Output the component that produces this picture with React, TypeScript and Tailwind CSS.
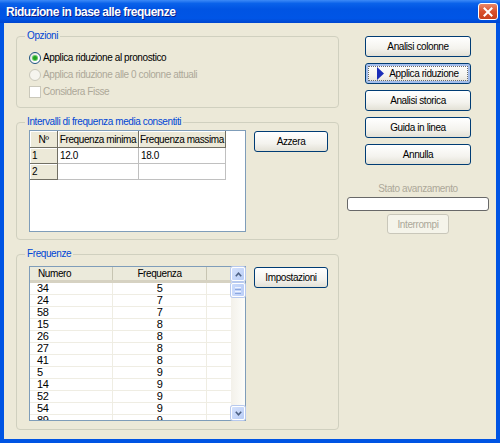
import type { ReactNode } from 'react';

const frequenze: [number, number][] = [
  [34, 5],
  [24, 7],
  [58, 7],
  [15, 8],
  [26, 8],
  [27, 8],
  [41, 8],
  [5, 9],
  [14, 9],
  [52, 9],
  [54, 9],
  [89, 9]
];

const XpButton = ({ children, className = '' }: { children: ReactNode; className?: string }) => (
  <button
    type="button"
    className={`flex h-[21px] items-center justify-center rounded-[3px] border border-[#003C74] bg-[linear-gradient(180deg,#FFFFFF_0%,#F4F3EE_60%,#E3E1D6_100%)] text-black ${className}`}
  >
    {children}
  </button>
);

const Group = ({ label, className = '', children }: { label: string; className?: string; children: ReactNode }) => (
  <div className={`relative rounded-[4px] border border-[#D0D0BF] ${className}`}>
    <span className="absolute -top-[7px] left-[8px] bg-[#ECE9D8] px-[2px] leading-[12px] text-[#0046D5]">{label}</span>
    {children}
  </div>
);

const Radio = ({ checked, disabled }: { checked?: boolean; disabled?: boolean }) => (
  <span
    className={`flex h-[12px] w-[12px] items-center justify-center rounded-full border ${
      disabled
        ? 'border-[#CAC8BB] bg-[#F5F4EE]'
        : 'border-[#1C5180] bg-[linear-gradient(135deg,#DCDCD7_0%,#FFFFFF_70%)]'
    }`}
  >
    {checked && <span className="h-[4px] w-[4px] rounded-full bg-[#21A121] shadow-[0_0_0_1px_#64C864]" />}
  </span>
);

const Chevron = ({ up }: { up?: boolean }) => (
  <svg width="7" height="5" viewBox="0 0 7 5">
    <polyline
      points={up ? '0.8,4.2 3.5,1.2 6.2,4.2' : '0.8,0.8 3.5,3.8 6.2,0.8'}
      fill="none"
      stroke="#4D6185"
      strokeWidth="1.6"
    />
  </svg>
);

const headCell = 'border-r border-b border-[#716F64] bg-[#ECE9D8] shadow-[inset_1px_1px_0_#FFFFFF]';

export default function App() {
  return (
    <div className="flex h-[443px] w-[500px] flex-col overflow-hidden bg-[#0054E3] font-['Liberation_Sans',Arial,sans-serif] text-[10px] tracking-[-0.4px] text-black">
      {/* title bar */}
      <div className="flex h-[23px] shrink-0 items-center justify-between bg-[linear-gradient(180deg,#3D8AF7_0%,#0A62EA_15%,#0054E3_40%,#0055E6_80%,#0046CF_100%)]">
        <span className="pl-[6px] text-[12px] font-bold tracking-[-0.5px] text-white [text-shadow:1px_1px_0_#0A1E8A]">
          Riduzione in base alle frequenze
        </span>
        <span className="mr-[2px] flex h-[17px] w-[20px] items-center justify-center rounded-[3px] border border-white bg-[linear-gradient(180deg,#E9886A_0%,#D9502B_50%,#C8401C_100%)]">
          <svg width="10" height="10" viewBox="0 0 10 10">
            <path d="M1.5 1.5 L8.5 8.5 M8.5 1.5 L1.5 8.5" stroke="#FFFFFF" strokeWidth="2" strokeLinecap="square" />
          </svg>
        </span>
      </div>

      {/* body */}
      <div className="mx-[4px] mb-[4px] flex flex-1 gap-[8px] bg-[#ECE9D8] pl-[12px] pt-[13px]">
        {/* left column */}
        <div className="flex w-[323px] flex-col">
          <Group label="Opzioni" className="h-[72px] pl-[12px] pt-[12px]">
            <div className="flex h-[17px] items-center gap-[2px]">
              <Radio checked />
              <span>Applica riduzione al pronostico</span>
            </div>
            <div className="flex h-[17px] items-center gap-[2px] text-[#ACA899]">
              <Radio disabled />
              <span>Applica riduzione alle 0 colonne attuali</span>
            </div>
            <div className="flex h-[17px] items-center gap-[2px] text-[#ACA899]">
              <span className="h-[12px] w-[12px] border border-[#CAC8BB] bg-white" />
              <span>Considera Fisse</span>
            </div>
          </Group>

          <Group label="Intervalli di frequenza media consentiti" className="mt-[14px] flex h-[118px] gap-[8px] pl-[12px] pt-[7px]">
            <div className="h-[102px] w-[217px] border border-[#7F9DB9] bg-white">
              <div className="flex h-[17px]">
                <div className={`flex w-[28px] items-center justify-center ${headCell}`}>Nº</div>
                <div className={`flex w-[81px] items-center justify-center ${headCell}`}>Frequenza minima</div>
                <div className={`flex w-[87px] items-center justify-center ${headCell}`}>Frequenza massima</div>
              </div>
              {[
                ['1', '12.0', '18.0'],
                ['2', '', '']
              ].map(([n, a, b]) => (
                <div key={n} className="flex h-[16px]">
                  <div className={`flex w-[28px] items-center pl-[2px] ${headCell}`}>{n}</div>
                  <div className="flex w-[81px] items-center border-r border-b border-[#C0C0C0] pl-[2px]">{a}</div>
                  <div className="flex w-[87px] items-center border-r border-b border-[#C0C0C0] pl-[2px]">{b}</div>
                </div>
              ))}
            </div>
            <XpButton className="mt-[1px] w-[74px]">Azzera</XpButton>
          </Group>

          <Group label="Frequenze" className="mt-[14px] flex h-[176px] gap-[8px] pl-[12px] pt-[11px]">
            <div className="flex h-[155px] w-[217px] border border-[#7F9DB9] bg-white">
              <div className="flex w-[201px] flex-col overflow-hidden">
                <div className="flex h-[16px] shrink-0 border-b-[3px] border-[#D6D2C2] bg-[#EBEADB]">
                  <div className="flex w-[83px] items-center border-r border-[#C7C5B2] pl-[8px]">Numero</div>
                  <div className="flex w-[94px] items-center justify-center border-r border-[#C7C5B2]">Frequenza</div>
                  <div className="flex-1" />
                </div>
                {frequenze.map(([n, f]) => (
                  <div key={n} className="flex h-[12px] shrink-0 text-[11px] leading-[11px]">
                    <div className="flex w-[83px] items-center border-r border-b border-[#EFEDE3] pl-[7px]">{n}</div>
                    <div className="flex w-[94px] items-center justify-center border-r border-b border-[#EFEDE3]">{f}</div>
                    <div className="flex-1 border-b border-[#EFEDE3]" />
                  </div>
                ))}
              </div>
              <div className="flex w-[14px] flex-col bg-[linear-gradient(90deg,#F3F1EA_0%,#FDFDFA_100%)]">
                <div className="flex h-[14px] items-center justify-center rounded-[2px] border border-[#FFFFFF] bg-[linear-gradient(135deg,#D4E1FC_0%,#B9CDF6_100%)] shadow-[0_0_0_1px_#B7C9EE]">
                  <Chevron up />
                </div>
                <div className="mt-[2px] flex h-[14px] flex-col items-center justify-center gap-[1px] rounded-[2px] border border-white bg-[linear-gradient(90deg,#CADAFB_0%,#BCCFF7_100%)] shadow-[0_0_0_1px_#B7C9EE]">
                  <span className="h-px w-[6px] bg-[#EEF3FE]" />
                  <span className="h-px w-[6px] bg-[#8CA7DE]" />
                  <span className="h-px w-[6px] bg-[#EEF3FE]" />
                  <span className="h-px w-[6px] bg-[#8CA7DE]" />
                </div>
                <div className="flex-1" />
                <div className="flex h-[14px] items-center justify-center rounded-[2px] border border-[#FFFFFF] bg-[linear-gradient(135deg,#D4E1FC_0%,#B9CDF6_100%)] shadow-[0_0_0_1px_#B7C9EE]">
                  <Chevron />
                </div>
              </div>
            </div>
            <XpButton className="mt-[1px] w-[74px]">Impostazioni</XpButton>
          </Group>
        </div>

        {/* right column */}
        <div className="flex w-[142px] flex-col items-center">
          <div className="flex flex-col gap-[6px]">
            <XpButton className="w-[106px]">Analisi colonne</XpButton>
            <XpButton className="w-[106px] p-[2px] shadow-[inset_0_0_0_2px_#A4BEEC]">
              <span className="flex h-full w-full items-center justify-center gap-[5px] border border-dotted border-[#6B6B6B]">
                <svg width="7" height="13" viewBox="0 0 7 13">
                  <polygon points="0,0 7,6.5 0,13" fill="#1A2DB8" />
                </svg>
                <span>Applica riduzione</span>
              </span>
            </XpButton>
            <XpButton className="w-[106px]">Analisi storica</XpButton>
            <XpButton className="w-[106px]">Guida in linea</XpButton>
            <XpButton className="w-[106px]">Annulla</XpButton>
          </div>
          <span className="mt-[18px] leading-[12px] text-[#ACA899]">Stato avanzamento</span>
          <div className="mt-[2px] h-[14px] w-[142px] rounded-[3px] border border-[#686868] bg-white" />
          <div className="mt-[3px] flex h-[20px] w-[62px] items-center justify-center rounded-[3px] border border-[#C9C7BA] bg-[#F5F4EA] text-[#ACA899]">
            Interrompi
          </div>
        </div>
      </div>
    </div>
  );
}
